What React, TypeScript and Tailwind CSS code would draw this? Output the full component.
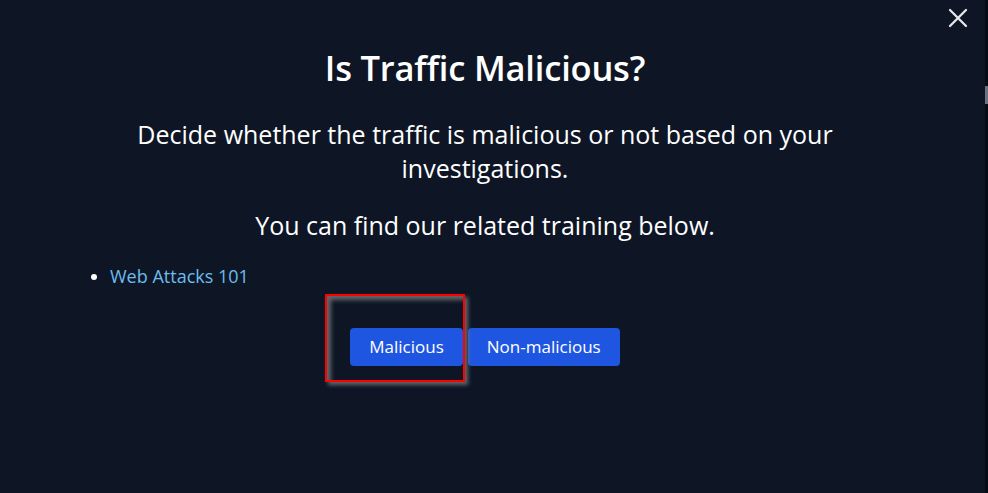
const trainings = [{ title: "Web Attacks 101" }];

export default function App() {
  return (
    <div
      className="w-[988px] h-[493px] bg-[#0e1626] text-white flex overflow-hidden"
      style={{ fontFamily: '"Open Sans", "Noto Sans", sans-serif' }}
    >
      <div className="flex-1 flex flex-col">
        <div className="flex justify-end pt-[8px] pr-[17px] h-[32px]">
          <button className="text-[#e5e7eb] w-[20px] h-[20px]">
            <svg viewBox="0 0 20 20" width="20" height="20" stroke="currentColor" strokeWidth="2.3" strokeLinecap="round">
              <path d="M2 2L18 18M18 2L2 18" />
            </svg>
          </button>
        </div>
        <div className="pl-[70px] pr-[85px] flex flex-col">
          <h2 className="text-center text-[34.5px] font-semibold leading-none mt-[19px] tracking-[-0.2px]">
            Is Traffic Malicious?
          </h2>
          <p className="text-center text-[25px] leading-[34px] mt-[31px] px-[60px]">
            Decide whether the traffic is malicious or not based on your investigations.
          </p>
          <p className="text-center text-[25px] leading-[34px] mt-[23px]">
            You can find our related training below.
          </p>
          <ul className="list-disc pl-[40px] mt-[21px] text-[18px] leading-[27px] marker:text-white">
            {trainings.map((t) => (
              <li key={t.title}>
                <a className="text-[#6cbcec]">{t.title}</a>
              </li>
            ))}
          </ul>
          <div className="flex justify-center gap-[5px] mt-[38px]">
            <div className="relative">
              <button className="bg-[#1f56e1] rounded-[4px] px-[19px] h-[38px] text-[17px]">
                Malicious
              </button>
              <div className="absolute left-[-25px] top-[-34px] w-[140px] h-[88px] border-2 border-[#ff0000] shadow-[3px_3px_4px_rgba(120,120,120,0.8),inset_4px_4px_4px_rgba(120,120,120,0.8)]" />
            </div>
            <button className="bg-[#1f56e1] rounded-[4px] px-[19px] h-[38px] text-[17px]">
              Non-malicious
            </button>
          </div>
        </div>
      </div>
      <div className="w-[3px] bg-[#070b13] flex flex-col">
        <div className="h-[86px]" />
        <div className="h-[18px] bg-[#6b7280]" />
      </div>
    </div>
  );
}
